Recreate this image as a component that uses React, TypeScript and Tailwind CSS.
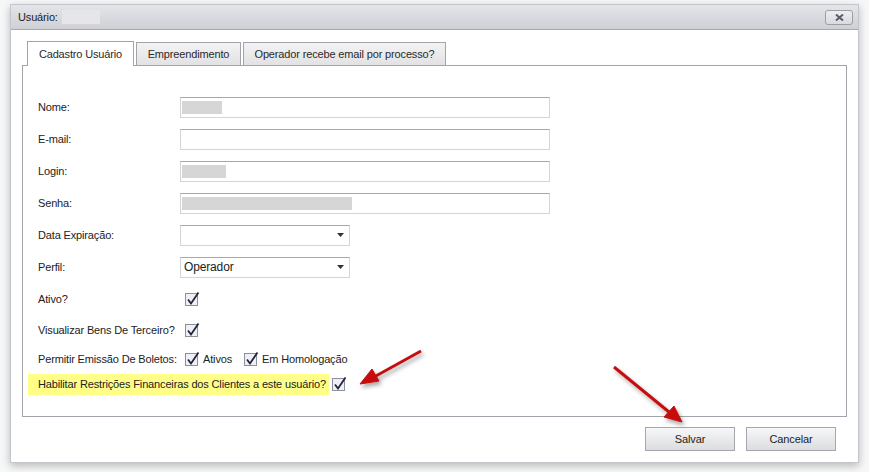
import React from "react";

const font = { fontFamily: '"Liberation Sans", Arial, sans-serif', letterSpacing: "-0.15px" };

function Check() {
  return (
    <svg width="15" height="15" viewBox="0 0 15 15" className="block">
      <rect x="0.5" y="1.5" width="12" height="12" fill="#eef0f5" stroke="#8d8f9c" />
      <polyline points="3,7.5 6,11.5 13.5,0.5" fill="none" stroke="#23253a" strokeWidth="1.8" />
    </svg>
  );
}

function TextInput({ redact }: { redact?: number }) {
  return (
    <div className="h-[21px] w-[370px] border border-[#d3d5dc] border-t-[#a3a7b3] bg-white flex items-center pl-[1px]">
      {redact ? <div className="h-[13px] bg-[#d6d6d6]" style={{ width: redact }} /> : null}
    </div>
  );
}

function Select({ value }: { value?: string }) {
  return (
    <div className="h-[21px] w-[170px] border border-[#d3d5dc] border-t-[#a3a7b3] bg-white flex items-center justify-between pl-[3px] pr-[5px]">
      <span className="text-[12px] text-[#222]">{value}</span>
      <svg width="7" height="4" viewBox="0 0 7 4">
        <polygon points="0,0 7,0 3.5,4" fill="#333" />
      </svg>
    </div>
  );
}

function Row({ label, h, children }: { label: string; h: number; children?: React.ReactNode }) {
  return (
    <div className="flex items-center pl-[15px]" style={{ height: h }}>
      <div className="w-[142px] shrink-0 whitespace-nowrap text-[11px] text-[#222]">{label}</div>
      {children}
    </div>
  );
}

export default function App() {
  return (
    <div className="relative w-[869px] h-[472px] overflow-hidden bg-[#f6f7f8]" style={font}>
      {/* dialog window */}
      <div className="ml-[10px] mt-[4px] w-[849px] h-[459px] bg-white border border-[#c4c6cc] shadow-[0_3px_8px_rgba(0,0,0,0.25)] flex flex-col">
        <div className="h-[25px] flex items-center justify-between pl-[7px] pr-[5px] bg-gradient-to-b from-[#e4e5e9] to-[#cfd0d6] border-b border-[#a7a8b2]">
          <div className="flex items-center text-[11px] text-[#1e1e1e]">
            Usuário:
            <div className="ml-[4px] w-[38px] h-[14px] bg-[#e6e6e8]" />
          </div>
          <div className="w-[28px] h-[15px] rounded-[3px] border border-[#9c9ea6] bg-gradient-to-b from-[#eeeef1] to-[#d9dadf] flex items-center justify-center">
            <svg width="9" height="7" viewBox="0 0 9 7">
              <path d="M1 0.5 L8 6.5 M8 0.5 L1 6.5" stroke="#5a5c66" strokeWidth="2" />
            </svg>
          </div>
        </div>

        <div className="pl-[11px] pt-[11px] flex flex-col">
          {/* tabs */}
          <div className="flex items-end pl-[5px] gap-[2px] h-[25px] text-[11px] text-[#2a2a2a]">
            <div className="h-[25px] w-[107px] border border-b-0 border-[#a2a4ac] bg-white flex items-center justify-center relative z-10">
              Cadastro Usuário
            </div>
            <div className="h-[24px] w-[105px] border border-[#a2a4ac] bg-gradient-to-b from-[#f3f3f4] to-[#e2e2e4] flex items-center justify-center">
              Empreendimento
            </div>
            <div className="h-[24px] w-[203px] border border-[#a2a4ac] bg-gradient-to-b from-[#f3f3f4] to-[#e2e2e4] flex items-center justify-center">
              Operador recebe email por processo?
            </div>
          </div>

          {/* panel */}
          <div className="-mt-[1px] w-[825px] h-[352px] border border-[#a2a4ac] bg-white pt-[25px]">
            <Row label="Nome:" h={32}>
              <TextInput redact={40} />
            </Row>
            <Row label="E-mail:" h={32}>
              <TextInput />
            </Row>
            <Row label="Login:" h={32}>
              <TextInput redact={44} />
            </Row>
            <Row label="Senha:" h={32}>
              <TextInput redact={170} />
            </Row>
            <Row label="Data Expiração:" h={32}>
              <Select />
            </Row>
            <Row label="Perfil:" h={32}>
              <Select value="Operador" />
            </Row>
            <Row label="Ativo?" h={32}>
              <div className="pl-[5px]">
                <Check />
              </div>
            </Row>
            <Row label="Visualizar Bens De Terceiro?" h={30}>
              <div className="pl-[5px]">
                <Check />
              </div>
            </Row>
            <Row label="Permitir Emissão De Boletos:" h={28}>
              <div className="pl-[5px] flex items-center text-[11px] text-[#222]">
                <Check />
                <span className="ml-[3px]">Ativos</span>
                <div className="ml-[12px]">
                  <Check />
                </div>
                <span className="ml-[3px]">Em Homologação</span>
              </div>
            </Row>
            <div className="h-[22px] flex items-center pl-[5px]">
              <div className="h-[21px] bg-[#ffff88] pl-[10px] pr-[3px] flex items-center whitespace-nowrap text-[11px] text-[#222]">
                Habilitar Restrições Financeiras dos Clientes a este usuário?
              </div>
              <div className="ml-[3px]">
                <Check />
              </div>
            </div>
          </div>
        </div>

        {/* buttons */}
        <div className="flex justify-end gap-[11px] pr-[22px] mt-[10px] text-[11px] text-[#222]">
          <button className="w-[90px] h-[24px] border border-[#a6a7ad] bg-gradient-to-b from-[#f7f7f8] to-[#dcdde0]">
            Salvar
          </button>
          <button className="w-[90px] h-[24px] border border-[#a6a7ad] bg-gradient-to-b from-[#f7f7f8] to-[#dcdde0]">
            Cancelar
          </button>
        </div>
      </div>

      {/* annotation arrows */}
      <svg className="absolute inset-0 pointer-events-none" width="869" height="472" viewBox="0 0 869 472">
        <defs>
          <filter id="sh" x="-20%" y="-20%" width="140%" height="140%">
            <feDropShadow dx="2" dy="3" stdDeviation="2" floodColor="#000" floodOpacity="0.35" />
          </filter>
        </defs>
        <g filter="url(#sh)" fill="#c50d0d" stroke="#c50d0d">
          <line x1="421" y1="351" x2="374" y2="377" strokeWidth="3" />
          <polygon points="360,384 372,369 379,381" strokeWidth="1" />
          <line x1="614" y1="367" x2="669" y2="412" strokeWidth="3" />
          <polygon points="682,422 664,417 674,406" strokeWidth="1" />
        </g>
      </svg>
    </div>
  );
}
